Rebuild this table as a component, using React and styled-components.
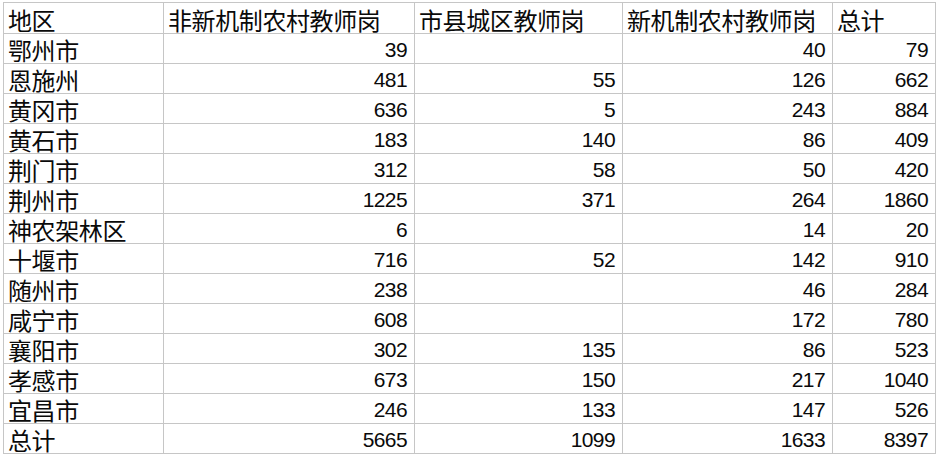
import styled, { createGlobalStyle } from 'styled-components'

const GlobalStyle = createGlobalStyle`
  html, body {
    margin: 0;
    padding: 0;
    background: #ffffff;
  }
`

const gridLine = '#c6c6c6'

const Page = styled.div`
  width: 944px;
  height: 458px;
  overflow: hidden;
  padding: 2px 0 0 3px;
  box-sizing: border-box;
  background: #ffffff;
`

const Sheet = styled.div`
  display: grid;
  grid-template-columns: 160px 251px 208px 210px 103px;
  grid-template-rows: 31px;
  grid-auto-rows: 30px;
  border-top: 1px solid ${gridLine};
  border-left: 1px solid ${gridLine};
  width: max-content;
`

const Cell = styled.div`
  display: flex;
  align-items: ${({ $numeric }) => ($numeric ? 'center' : 'flex-end')};
  justify-content: ${({ $numeric }) => ($numeric ? 'flex-end' : 'flex-start')};
  box-sizing: border-box;
  border-right: 1px solid ${gridLine};
  border-bottom: 1px solid ${gridLine};
  padding: ${({ $numeric }) => ($numeric ? '3px 7px 0 0' : '0 0 1px 4px')};
  color: #0a0a0a;
  font-family: ${({ $numeric }) =>
    $numeric ? '"Liberation Sans", Arial, sans-serif' : '"Noto Sans CJK SC", "Noto Sans", sans-serif'};
  font-size: ${({ $numeric }) => ($numeric ? '21px' : '24px')};
  line-height: ${({ $numeric }) => ($numeric ? '22px' : '25px')};
  letter-spacing: ${({ $numeric }) => ($numeric ? '-0.6px' : '-0.4px')};
  white-space: nowrap;
`

const headers = ['地区', '非新机制农村教师岗', '市县城区教师岗', '新机制农村教师岗', '总计']

const rows = [
  ['鄂州市', 39, null, 40, 79],
  ['恩施州', 481, 55, 126, 662],
  ['黄冈市', 636, 5, 243, 884],
  ['黄石市', 183, 140, 86, 409],
  ['荆门市', 312, 58, 50, 420],
  ['荆州市', 1225, 371, 264, 1860],
  ['神农架林区', 6, null, 14, 20],
  ['十堰市', 716, 52, 142, 910],
  ['随州市', 238, null, 46, 284],
  ['咸宁市', 608, null, 172, 780],
  ['襄阳市', 302, 135, 86, 523],
  ['孝感市', 673, 150, 217, 1040],
  ['宜昌市', 246, 133, 147, 526],
  ['总计', 5665, 1099, 1633, 8397],
]

export default function App() {
  return (
    <>
      <GlobalStyle />
      <Page>
        <Sheet>
          {headers.map((title) => (
            <Cell key={title}>{title}</Cell>
          ))}
          {rows.map(([name, ...values]) => (
            <>
              <Cell key={name}>{name}</Cell>
              {values.map((value, i) => (
                <Cell key={`${name}-${i}`} $numeric>
                  {value ?? ''}
                </Cell>
              ))}
            </>
          ))}
        </Sheet>
      </Page>
    </>
  )
}
